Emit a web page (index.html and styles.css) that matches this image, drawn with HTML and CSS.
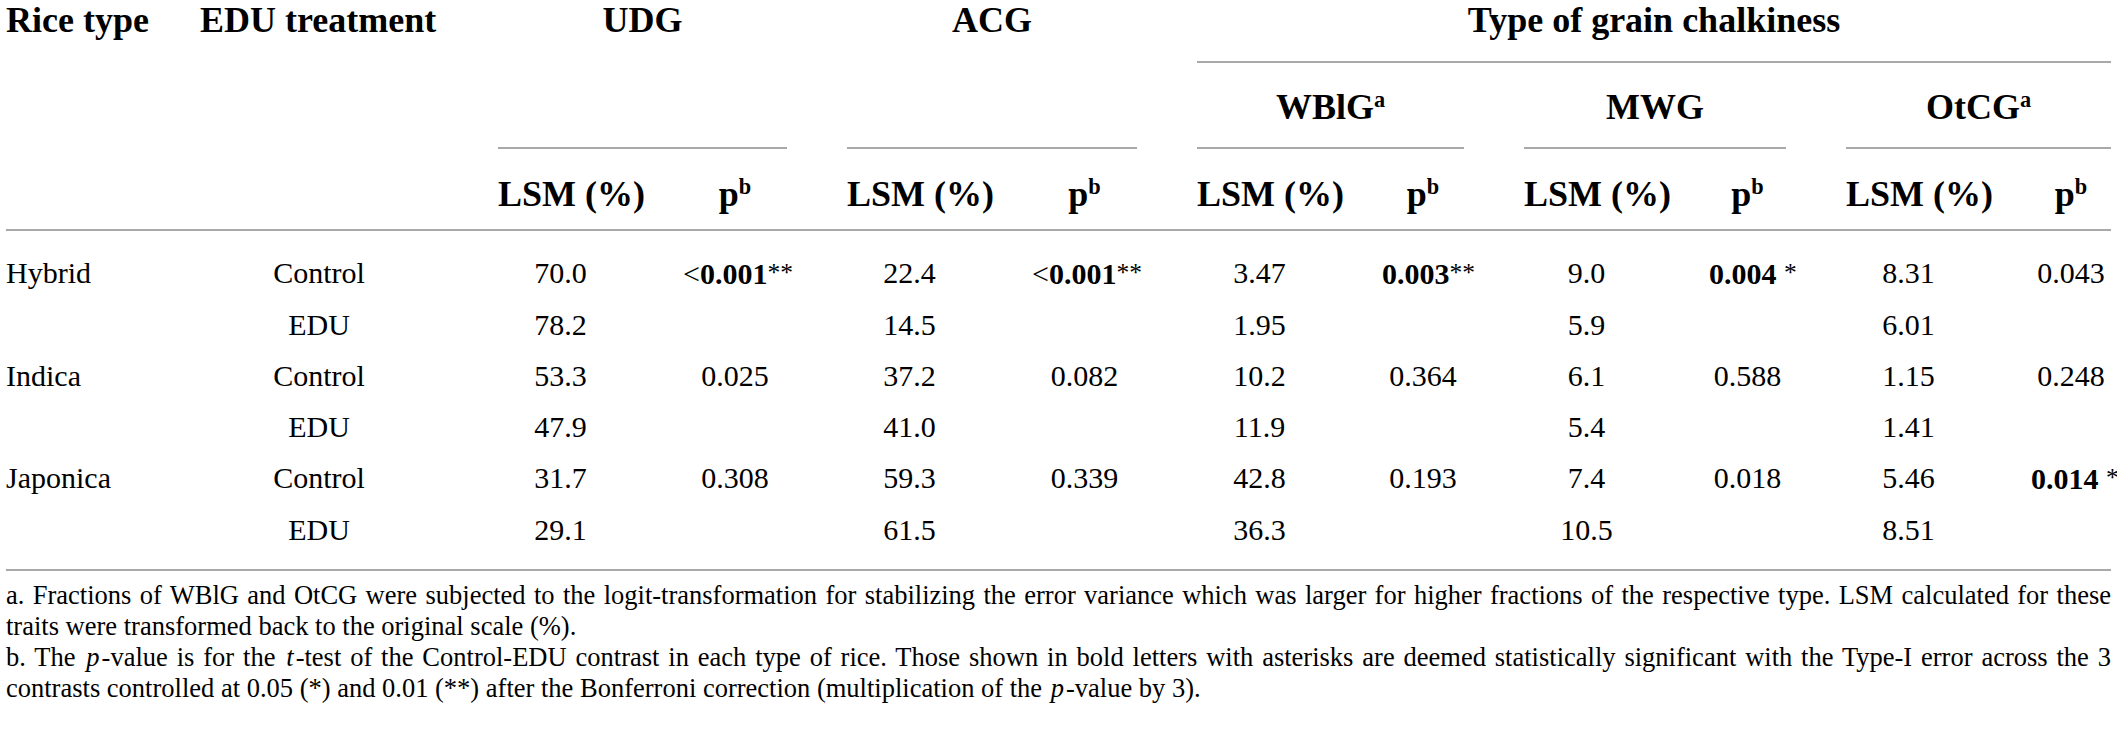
FILE: index.html
```html
<!DOCTYPE html>
<html lang="en">
<head>
    <meta charset="UTF-8">
    <title>EDU treatment and grain chalkiness</title>
    <link rel="stylesheet" href="styles.css">
</head>
<body>

<div class="table">
    <div class="head">
        <div class="rice">Rice type</div>
        <div class="edu">EDU treatment</div>
        <div class="group udg">UDG</div>
        <div class="group acg">ACG</div>
        <div class="group type">Type of grain chalkiness</div>
        <div class="sub wblg">WBlG<sup>a</sup></div>
        <div class="sub mwg">MWG</div>
        <div class="sub otcg">OtCG<sup>a</sup></div>

        <div class="col">LSM (%)</div>
        <div class="col">p<sup>b</sup></div>
        <div class="col">LSM (%)</div>
        <div class="col">p<sup>b</sup></div>
        <div class="col">LSM (%)</div>
        <div class="col">p<sup>b</sup></div>
        <div class="col">LSM (%)</div>
        <div class="col">p<sup>b</sup></div>
        <div class="col">LSM (%)</div>
        <div class="col">p<sup>b</sup></div>
    </div>

    <div class="body">
        <!-- Hybrid -->
        <div class="type-name">Hybrid</div>
        <div>Control</div>
        <div>70.0</div>
        <div>&lt;<b>0.001</b><span class="star">**</span></div>
        <div>22.4</div>
        <div>&lt;<b>0.001</b><span class="star">**</span></div>
        <div>3.47</div>
        <div><b>0.003</b><span class="star">**</span></div>
        <div>9.0</div>
        <div><b>0.004</b> <span class="star">*</span></div>
        <div>8.31</div>
        <div>0.043</div>

        <div class="type-name"></div>
        <div>EDU</div>
        <div>78.2</div>
        <div></div>
        <div>14.5</div>
        <div></div>
        <div>1.95</div>
        <div></div>
        <div>5.9</div>
        <div></div>
        <div>6.01</div>
        <div></div>

        <!-- Indica -->
        <div class="type-name">Indica</div>
        <div>Control</div>
        <div>53.3</div>
        <div>0.025</div>
        <div>37.2</div>
        <div>0.082</div>
        <div>10.2</div>
        <div>0.364</div>
        <div>6.1</div>
        <div>0.588</div>
        <div>1.15</div>
        <div>0.248</div>

        <div class="type-name"></div>
        <div>EDU</div>
        <div>47.9</div>
        <div></div>
        <div>41.0</div>
        <div></div>
        <div>11.9</div>
        <div></div>
        <div>5.4</div>
        <div></div>
        <div>1.41</div>
        <div></div>

        <!-- Japonica -->
        <div class="type-name">Japonica</div>
        <div>Control</div>
        <div>31.7</div>
        <div>0.308</div>
        <div>59.3</div>
        <div>0.339</div>
        <div>42.8</div>
        <div>0.193</div>
        <div>7.4</div>
        <div>0.018</div>
        <div>5.46</div>
        <div><b>0.014</b> <span class="star">*</span></div>

        <div class="type-name"></div>
        <div>EDU</div>
        <div>29.1</div>
        <div></div>
        <div>61.5</div>
        <div></div>
        <div>36.3</div>
        <div></div>
        <div>10.5</div>
        <div></div>
        <div>8.51</div>
        <div></div>
    </div>
</div>

<div class="notes">
    <p>
        <span class="line full">a. Fractions of WBlG and OtCG were subjected to the logit-transformation for stabilizing the error variance which was larger for higher fractions of the respective type. LSM calculated for these</span>
        <span class="line">traits were transformed back to the original scale (%).</span>
    </p>
    <p>
        <span class="line full">b. The <i>p</i>-value is for the <i>t</i>-test of the Control-EDU contrast in each type of rice. Those shown in bold letters with asterisks are deemed statistically significant with the Type-I error across the 3</span>
        <span class="line">contrasts controlled at 0.05 (*) and 0.01 (**) after the Bonferroni correction (multiplication of the <i>p</i>-value by 3).</span>
    </p>
</div>

</body>
</html>
```

FILE: styles.css
```css
body {
    font-family: "Liberation Serif", "Times New Roman", serif;
    color: #000;
    background-color: #fff;
    margin: 0;
    padding: 0;
}

.table {
    margin-left: 6px;
    width: 2105px;
}

.head,
.body {
    display: grid;
    grid-template-columns: 134px 238px 125px 104px 125px 105px 125px 82px 125px 77px 125px 80px;
    column-gap: 60px;
}

/* header block */
.head {
    font-size: 36px;
    font-weight: bold;
    line-height: 40px;
    text-align: center;
    white-space: nowrap;
    border-bottom: 2px solid #a9a9a9;
}

.head sup {
    font-size: 0.62em;
    line-height: 0;
    vertical-align: 0.55em;
}

.rice,
.edu {
    grid-row: 1 / 4;
    text-align: left;
}

.rice { grid-column: 1; }
.edu { grid-column: 2; }

.group {
    grid-row: 1 / 3;
    border-bottom: 2px solid #a9a9a9;
}

.udg { grid-column: 3 / 5; }
.acg { grid-column: 5 / 7; }

.type {
    grid-row: 1;
    grid-column: 7 / 13;
    padding-bottom: 21px;
}

.sub {
    grid-row: 2;
    padding: 24px 0 20px;
    border-bottom: 2px solid #a9a9a9;
}

.wblg { grid-column: 7 / 9; }
.mwg { grid-column: 9 / 11; }
.otcg { grid-column: 11 / 13; }

.col {
    grid-row: 3;
    padding: 25px 0 15px;
}

/* data rows */
.body {
    font-size: 30px;
    line-height: 51px;
    text-align: center;
    white-space: nowrap;
    padding: 16px 0 14px;
    border-bottom: 2px solid #a9a9a9;
}

.body .type-name {
    text-align: left;
}

.star {
    font-size: 0.85em;
    vertical-align: 0.12em;
}

/* footnotes */
.notes {
    margin-left: 6px;
    width: 2105px;
    padding-top: 9px;
    font-size: 26.5px;
    line-height: 31px;
}

.notes p {
    margin: 0;
}

.notes .line {
    display: block;
    white-space: nowrap;
}

/* first line of each note runs edge to edge */
.notes .full {
    text-align: justify;
    text-align-last: justify;
}

.notes i {
    padding: 0 2px;
}
```
